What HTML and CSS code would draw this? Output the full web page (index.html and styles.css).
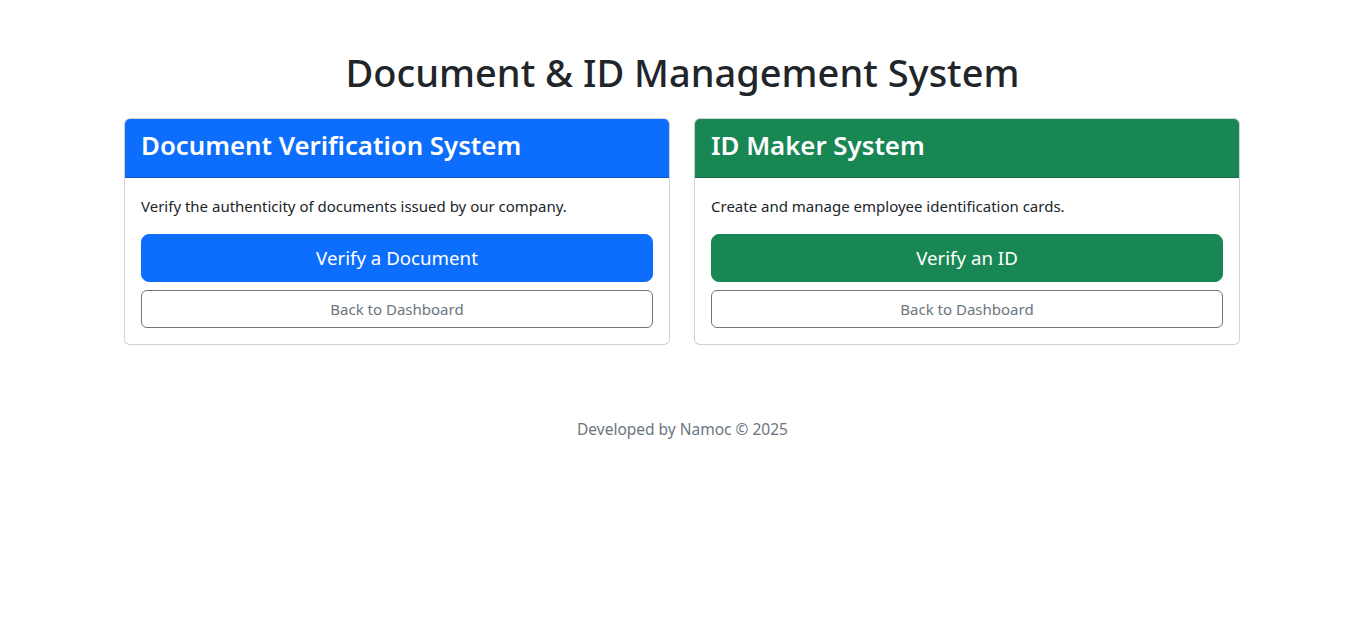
FILE: index.html
```html
<!DOCTYPE html>
<html lang="en">
<head>
<meta charset="utf-8">
<title>Document &amp; ID Management System</title>
<link rel="stylesheet" href="styles.css">
</head>
<body>
<main class="container">
  <h1 class="page-title">Document &amp; ID Management System</h1>
  <div class="cards">
    <section class="card">
      <div class="card-header header-primary">
        <h3>Document Verification System</h3>
      </div>
      <div class="card-body">
        <p>Verify the authenticity of documents issued by our company.</p>
        <div class="actions">
          <a class="btn btn-lg btn-primary" href="#">Verify a Document</a>
          <a class="btn btn-outline" href="#">Back to Dashboard</a>
        </div>
      </div>
    </section>
    <section class="card">
      <div class="card-header header-success">
        <h3>ID Maker System</h3>
      </div>
      <div class="card-body">
        <p>Create and manage employee identification cards.</p>
        <div class="actions">
          <a class="btn btn-lg btn-success" href="#">Verify an ID</a>
          <a class="btn btn-outline" href="#">Back to Dashboard</a>
        </div>
      </div>
    </section>
  </div>
</main>
<footer class="footer">Developed by Namoc © 2025</footer>
</body>
</html>
```

FILE: styles.css
```css
* { box-sizing: border-box; }
html, body { margin: 0; padding: 0; }
body {
  font-family: "Noto Sans", "Open Sans", sans-serif;
  font-size: 15px;
  line-height: 24px;
  color: #212529;
  background: #fff;
}
.container {
  width: 1141px;
  margin: 0 auto;
  padding: 48px 12px 0;
}
.page-title {
  margin: 0 0 22px;
  font-size: 38px;
  font-weight: 500;
  line-height: 48px;
  text-align: center;
}
.cards {
  display: grid;
  grid-template-columns: 546px 546px;
  column-gap: 24px;
}
.card {
  border: 1px solid rgba(0,0,0,.175);
  border-radius: 6px;
  overflow: hidden;
  background: #fff;
}
.card-header {
  padding: 10px 16px 8px;
  border-bottom: 1px solid rgba(0,0,0,.175);
  color: #fff;
}
.card-header h3 {
  margin: 0 0 6px;
  font-size: 25.8px;
  font-weight: 600;
  line-height: 33.6px;
}
.header-primary { background: #0d6efd; }
.header-success { background: #198754; }
.card-body { padding: 16px; }
.card-body p { margin: 0 0 16px; font-size: 15px; }
.actions { display: grid; row-gap: 8px; }
.btn {
  display: block;
  text-align: center;
  text-decoration: none;
  border: 1px solid transparent;
  border-radius: 6px;
  padding: 6px 12px;
  font-size: 15px;
  line-height: 24px;
}
.btn-lg {
  padding: 8px 16px;
  font-size: 18.7px;
  line-height: 30px;
  border-radius: 8px;
}
.btn-primary { background: #0d6efd; border-color: #0d6efd; color: #fff; }
.btn-success { background: #198754; border-color: #198754; color: #fff; }
.btn-outline { border-color: #6c757d; color: #6c757d; background: #fff; }
.footer {
  margin-top: 72px;
  text-align: center;
  color: #6c757d;
  font-size: 15.5px;
}
```
